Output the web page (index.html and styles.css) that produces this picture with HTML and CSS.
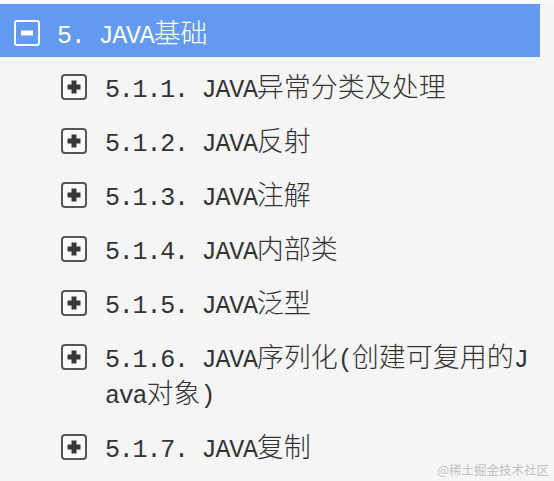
FILE: index.html
```html
<!DOCTYPE html>
<html lang="zh-CN">
<head>
<meta charset="utf-8">
<title>JAVA基础</title>
<link rel="stylesheet" href="styles.css">
</head>
<body>
<div class="page">
  <div class="topline"></div>
  <div class="header">
    <svg class="icon" width="26" height="26" viewBox="0 0 26 26" aria-hidden="true">
      <rect x="1" y="1" width="24" height="24" rx="2" fill="none" stroke="#ffffff" stroke-width="2"/>
      <rect x="7" y="10.5" width="12" height="5" fill="#ffffff"/>
    </svg>
    <span class="label"><span class="en">5. JAVA</span>基础</span>
  </div>
  <ul class="list">
    <li class="item">
      <svg class="icon" width="26" height="26" viewBox="0 0 26 26" aria-hidden="true">
        <rect x="1" y="1" width="24" height="24" rx="3" fill="#fafafa" stroke="#555555" stroke-width="2"/>
        <rect x="10.5" y="6.5" width="5" height="13" fill="#383838"/>
        <rect x="6.5" y="10.5" width="13" height="5" fill="#383838"/>
      </svg>
      <span class="label"><span class="en">5.1.1. JAVA</span>异常分类及处理</span>
    </li>
    <li class="item">
      <svg class="icon" width="26" height="26" viewBox="0 0 26 26" aria-hidden="true">
        <rect x="1" y="1" width="24" height="24" rx="3" fill="#fafafa" stroke="#555555" stroke-width="2"/>
        <rect x="10.5" y="6.5" width="5" height="13" fill="#383838"/>
        <rect x="6.5" y="10.5" width="13" height="5" fill="#383838"/>
      </svg>
      <span class="label"><span class="en">5.1.2. JAVA</span>反射</span>
    </li>
    <li class="item">
      <svg class="icon" width="26" height="26" viewBox="0 0 26 26" aria-hidden="true">
        <rect x="1" y="1" width="24" height="24" rx="3" fill="#fafafa" stroke="#555555" stroke-width="2"/>
        <rect x="10.5" y="6.5" width="5" height="13" fill="#383838"/>
        <rect x="6.5" y="10.5" width="13" height="5" fill="#383838"/>
      </svg>
      <span class="label"><span class="en">5.1.3. JAVA</span>注解</span>
    </li>
    <li class="item">
      <svg class="icon" width="26" height="26" viewBox="0 0 26 26" aria-hidden="true">
        <rect x="1" y="1" width="24" height="24" rx="3" fill="#fafafa" stroke="#555555" stroke-width="2"/>
        <rect x="10.5" y="6.5" width="5" height="13" fill="#383838"/>
        <rect x="6.5" y="10.5" width="13" height="5" fill="#383838"/>
      </svg>
      <span class="label"><span class="en">5.1.4. JAVA</span>内部类</span>
    </li>
    <li class="item">
      <svg class="icon" width="26" height="26" viewBox="0 0 26 26" aria-hidden="true">
        <rect x="1" y="1" width="24" height="24" rx="3" fill="#fafafa" stroke="#555555" stroke-width="2"/>
        <rect x="10.5" y="6.5" width="5" height="13" fill="#383838"/>
        <rect x="6.5" y="10.5" width="13" height="5" fill="#383838"/>
      </svg>
      <span class="label"><span class="en">5.1.5. JAVA</span>泛型</span>
    </li>
    <li class="item">
      <svg class="icon" width="26" height="26" viewBox="0 0 26 26" aria-hidden="true">
        <rect x="1" y="1" width="24" height="24" rx="3" fill="#fafafa" stroke="#555555" stroke-width="2"/>
        <rect x="10.5" y="6.5" width="5" height="13" fill="#383838"/>
        <rect x="6.5" y="10.5" width="13" height="5" fill="#383838"/>
      </svg>
      <span class="label"><span class="en">5.1.6. JAVA</span>序列化<span class="en">(</span>创建可复用的<span class="en">Java</span>对象<span class="en">)</span></span>
    </li>
    <li class="item">
      <svg class="icon" width="26" height="26" viewBox="0 0 26 26" aria-hidden="true">
        <rect x="1" y="1" width="24" height="24" rx="3" fill="#fafafa" stroke="#555555" stroke-width="2"/>
        <rect x="10.5" y="6.5" width="5" height="13" fill="#383838"/>
        <rect x="6.5" y="10.5" width="13" height="5" fill="#383838"/>
      </svg>
      <span class="label"><span class="en">5.1.7. JAVA</span>复制</span>
    </li>
  </ul>
  <div class="watermark">@稀土掘金技术社区</div>
</div>
</body>
</html>
```

FILE: styles.css
```css
html, body {
  margin: 0;
  padding: 0;
  background: #f5f5f5;
}

.page {
  position: relative;
  width: 554px;
  height: 481px;
  overflow: hidden;
  font-family: "Noto Sans CJK SC", "Liberation Serif", sans-serif;
  font-size: 27px;
  font-weight: 300;
  color: #333333;
}

.topline {
  height: 4px;
  background: #fafafa;
}

.header {
  display: flex;
  align-items: center;
  gap: 17px;
  box-sizing: border-box;
  width: 540px;
  height: 53px;
  padding: 3px 0 0 14px;
  background: #6399ee;
  color: #ffffff;
  line-height: 36px;
}

.icon {
  flex: none;
  display: block;
}

.header .icon {
  margin-top: 2px;
}

.list {
  list-style: none;
  margin: 3px 0 0 0;
  padding: 0;
  width: 536px;
}

.item {
  display: flex;
  align-items: flex-start;
  gap: 18px;
  padding: 8px 0 10px 61px;
  line-height: 36px;
}

.item .icon {
  margin-top: 6px;
}

.label {
  flex: 1;
  min-width: 0;
  word-break: break-all;
}

.en {
  font-family: "Liberation Mono", monospace;
  font-size: 25px;
  letter-spacing: -1.2px;
  font-weight: 400;
  line-height: 20px;
}

.watermark {
  position: absolute;
  right: 5px;
  bottom: 3px;
  font-size: 12.5px;
  line-height: 16px;
  font-weight: 400;
  color: #c2c2c2;
}
```
